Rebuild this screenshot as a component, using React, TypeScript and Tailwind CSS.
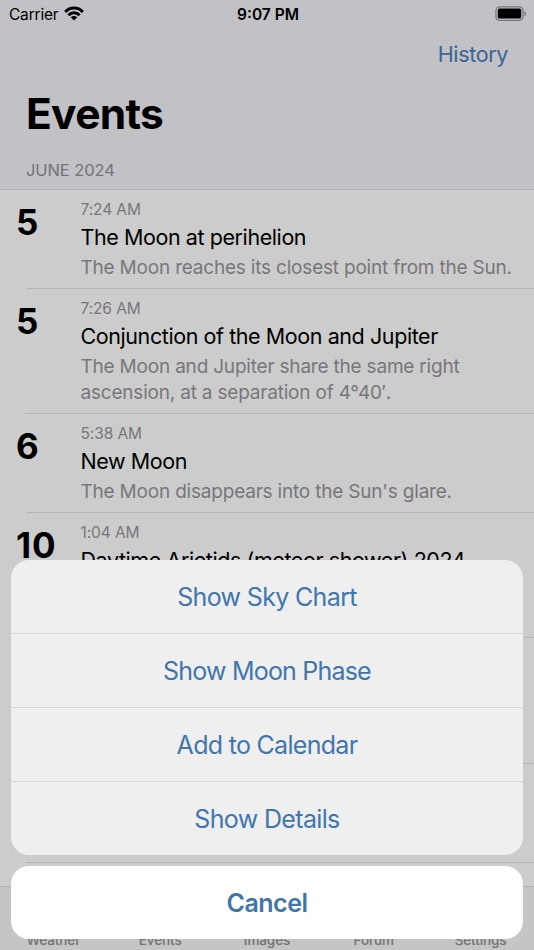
import React from 'react';

interface EventItem {
  day: string;
  time: string;
  title: string;
  description?: string;
  height: string;
}

const events: EventItem[] = [
  {
    day: '5',
    time: '7:24 AM',
    title: 'The Moon at perihelion',
    description: 'The Moon reaches its closest point from the Sun.',
    height: 'h-[99px]',
  },
  {
    day: '5',
    time: '7:26 AM',
    title: 'Conjunction of the Moon and Jupiter',
    description: 'The Moon and Jupiter share the same right ascension, at a separation of 4°40′.',
    height: 'h-[125px]',
  },
  {
    day: '6',
    time: '5:38 AM',
    title: 'New Moon',
    description: "The Moon disappears into the Sun's glare.",
    height: 'h-[99px]',
  },
  {
    day: '10',
    time: '1:04 AM',
    title: 'Daytime Arietids (meteor shower) 2024',
    height: 'h-[125px]',
  },
];

// Rows that sit completely under the action sheet
const coveredRows = ['h-[126px]', 'h-[99px]'];

const actions = [
  { label: 'Show Sky Chart', className: 'h-[74px] tracking-[-0.65px]' },
  { label: 'Show Moon Phase', className: 'h-[74px] tracking-[-0.8px]' },
  { label: 'Add to Calendar', className: 'h-[74px] tracking-[-0.7px]' },
  { label: 'Show Details', className: 'h-[73px] tracking-[-0.65px]' },
];

const tabs = ['Weather', 'Events', 'Images', 'Forum', 'Settings'];

const WifiIcon: React.FC = () => (
  <svg width="20" height="15" viewBox="0 0 20 15" fill="none" stroke="#000" strokeWidth="3">
    <path d="M1.2 5.9C6 0.7 14 0.7 18.8 5.9" />
    <path d="M4.4 9.2C7.5 6 12.5 6 15.6 9.2" />
    <path d="M10 14.6L6.7 11.3C8.6 9.6 11.4 9.6 13.3 11.3Z" fill="#000" stroke="none" />
  </svg>
);

const BatteryIcon: React.FC = () => (
  <svg width="32" height="16" viewBox="0 0 32 16" fill="none">
    <rect x="1" y="0.8" width="27" height="13.6" rx="3.8" stroke="#77767a" strokeWidth="1.3" />
    <rect x="2.8" y="2.6" width="23.4" height="10" rx="1.6" fill="#000" />
    <path d="M29.5 5.2C31.6 6 31.6 9.2 29.5 10Z" fill="#77767a" />
  </svg>
);

const StatusBar: React.FC = () => (
  <div className="grid grid-cols-3 items-center h-7 pl-[9px] pr-[7px] text-[15.5px] text-black">
    <div className="flex items-center gap-[6px] -mt-px">
      <span className="pt-[3px] tracking-[-0.2px]">Carrier</span>
      <WifiIcon />
    </div>
    <span className="pt-[2px] text-center font-semibold whitespace-nowrap">9:07 PM</span>
    <div className="flex justify-end">
      <BatteryIcon />
    </div>
  </div>
);

const EventRow: React.FC<{ event: EventItem }> = ({ event }) => (
  <div className={`relative flex shrink-0 pl-4 ${event.height}`}>
    <div className="w-[64px] shrink-0 pt-[11px] text-[35px] leading-[42px] font-bold tracking-[0.8px] text-black">
      {event.day}
    </div>
    <div className="flex-1 pt-[10px] pl-[0.5px]">
      <p className="text-[15.5px] leading-[20px] tracking-[-0.1px] text-[#77777a]">{event.time}</p>
      <p className="mt-[3px] text-[21.5px] leading-[28px] tracking-[-0.42px] whitespace-nowrap text-black">
        {event.title}
      </p>
      <p className="mt-[4px] w-[440px] text-[19px] leading-[26px] tracking-[-0.2px] text-[#77777a]">
        {event.description}
      </p>
    </div>
    <div className="absolute bottom-0 left-[26px] right-0 h-px bg-[#b5b5b7]" />
  </div>
);

const ActionSheet: React.FC = () => (
  <div className="absolute inset-x-[11px] bottom-[11px] flex flex-col gap-[11px] text-center text-[#4176ad]">
    <div className="flex flex-col overflow-hidden rounded-[18px] bg-[#efefef] divide-y divide-[#d5d6d6]">
      {actions.map((action) => (
        <button key={action.label} className={`pt-[3px] text-[25px] ${action.className}`}>
          {action.label}
        </button>
      ))}
    </div>
    <button className="h-[73px] pt-[2px] rounded-[18px] bg-white text-[25px] font-semibold tracking-[-0.5px]">
      Cancel
    </button>
  </div>
);

const App: React.FC = () => (
  <div className="relative flex flex-col w-[534px] h-[950px] overflow-hidden bg-[#cccccc] font-['Inter','Liberation_Sans',sans-serif]">
    <header className="flex flex-col shrink-0 h-[190px] bg-[#c2c1c6] border-b border-[#b6b5ba]">
      <StatusBar />
      <div className="flex justify-end items-center h-[54px] pr-[26px] pb-[2px]">
        <button className="text-[21.5px] tracking-[-0.35px] text-[#3a6594]">History</button>
      </div>
      <h1 className="pl-[26px] pt-[6px] text-[42.5px] leading-[52px] font-bold tracking-[-0.7px] text-black">
        Events
      </h1>
      <p className="pl-[26px] pt-[19px] text-[16.5px] leading-[22px] tracking-[-0.1px] text-[#747377]">
        JUNE 2024
      </p>
    </header>

    <main className="flex flex-col flex-1 min-h-0 overflow-hidden">
      {events.map((event) => (
        <EventRow key={event.time} event={event} />
      ))}
      {coveredRows.map((height, i) => (
        <div key={i} className={`shrink-0 ml-[26px] border-b border-[#b5b5b7] ${height}`} />
      ))}
    </main>

    <nav className="grid grid-cols-5 items-end shrink-0 h-[64px] pb-[2px] bg-[#c5c5c5] border-t border-[#adadad] text-center text-[13.5px] leading-[16px] font-medium tracking-[-0.1px] text-[#727272]">
      {tabs.map((tab) => (
        <span key={tab}>{tab}</span>
      ))}
    </nav>

    <ActionSheet />
  </div>
);

export default App;
